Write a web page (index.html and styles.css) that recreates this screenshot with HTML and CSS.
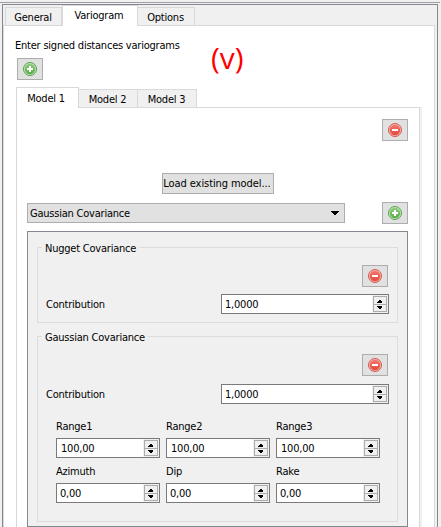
FILE: index.html
```html
<!DOCTYPE html>
<html lang="en">
<head>
<meta charset="utf-8">
<title>Variogram</title>
<link rel="stylesheet" href="styles.css">
</head>
<body>
<svg class="defs" width="0" height="0">
  <defs>
    <linearGradient id="green" x1="0" y1="0" x2="0" y2="1"><stop offset="0" stop-color="#8fca7f"/><stop offset="1" stop-color="#58ad48"/></linearGradient>
    <linearGradient id="red" x1="0" y1="0" x2="0" y2="1"><stop offset="0" stop-color="#f4786c"/><stop offset="1" stop-color="#e34a3c"/></linearGradient>
    <symbol id="plus" viewBox="0 0 14 14">
      <circle cx="7" cy="7" r="6.5" fill="#c9e6c1" stroke="#55a04b"/>
      <circle cx="7" cy="7" r="5.2" fill="url(#green)"/>
      <path d="M7 4v6M4 7h6" stroke="#fff" stroke-width="2"/>
    </symbol>
    <symbol id="minus" viewBox="0 0 14 14">
      <circle cx="7" cy="7" r="6.5" fill="#f7b9b1" stroke="#d05a50"/>
      <circle cx="7" cy="7" r="5.2" fill="url(#red)"/>
      <path d="M4 7h6" stroke="#fff" stroke-width="2"/>
    </symbol>
    <symbol id="spin" viewBox="0 0 16 18" shape-rendering="crispEdges">
      <path fill="#f0f0f0" d="M0 0h16v18H0z"/>
      <path fill="#acacac" d="M1 1h14v16H1z"/>
      <path fill="#f0f0f0" d="M2 2h12v7H2zM2 10h12v6H2z"/>
      <path d="M7 5h2v1H7zM6 6h4v1H6zM5 7h5v1H5zM5 11h5v1H5zM6 12h4v1H6zM7 13h2v1H7z"/>
    </symbol>
  </defs>
</svg>
<div class="window">
  <div class="frame">
    <div class="tabs main-tabs">
      <div class="tab general">General</div>
      <div class="tab active variogram">Variogram</div>
      <div class="tab options">Options</div>
    </div>
    <div class="pane">
      <div class="hint"><span class="hint-text">Enter signed distances variograms</span></div>
      <button class="icon-btn add-model"><svg><use href="#plus"/></svg></button>
      <div class="models">
        <div class="tabs model-tabs">
          <div class="tab active model">Model 1</div>
          <div class="tab model">Model 2</div>
          <div class="tab model">Model 3</div>
        </div>
        <div class="model-pane">
          <button class="icon-btn remove-model"><svg><use href="#minus"/></svg></button>
          <button class="load">Load existing model...</button>
          <div class="choose">
            <div class="combo"><span>Gaussian Covariance</span><svg width="8" height="4" shape-rendering="crispEdges"><path d="M0 0h8v1H0zM1 1h6v1H1zM2 2h4v1H2zM3 3h2v1H3z"/></svg></div>
            <button class="icon-btn"><svg><use href="#plus"/></svg></button>
          </div>
          <div class="scroll">
            <div class="group nugget">
              <div class="legend">Nugget Covariance</div>
              <button class="icon-btn"><svg><use href="#minus"/></svg></button>
              <div class="row"><label>Contribution</label><div class="spin"><span>1,0000</span><svg><use href="#spin"/></svg></div></div>
            </div>
            <div class="group gaussian">
              <div class="legend">Gaussian Covariance</div>
              <button class="icon-btn"><svg><use href="#minus"/></svg></button>
              <div class="row"><label>Contribution</label><div class="spin"><span>1,0000</span><svg><use href="#spin"/></svg></div></div>
              <div class="grid">
                <div class="field"><label>Range1</label><div class="spin wide"><span>100,00</span><svg><use href="#spin"/></svg></div></div>
                <div class="field"><label>Range2</label><div class="spin wide"><span>100,00</span><svg><use href="#spin"/></svg></div></div>
                <div class="field"><label>Range3</label><div class="spin wide"><span>100,00</span><svg><use href="#spin"/></svg></div></div>
                <div class="field"><label>Azimuth</label><div class="spin"><span>0,00</span><svg><use href="#spin"/></svg></div></div>
                <div class="field"><label>Dip</label><div class="spin"><span>0,00</span><svg><use href="#spin"/></svg></div></div>
                <div class="field"><label>Rake</label><div class="spin"><span>0,00</span><svg><use href="#spin"/></svg></div></div>
              </div>
            </div>
          </div>
        </div>
      </div>
    </div>
  </div>
</div>
<div class="note">(v)</div>
</body>
</html>
```
FILE: styles.css
```css
* { box-sizing: border-box; }
html, body { height: 100%; }
body {
  margin: 0;
  overflow: hidden;
  background: #f0f0f0;
  color: #000;
  font: 11px/14px "DejaVu Sans Condensed", "DejaVu Sans", sans-serif;
  font-stretch: condensed;
  letter-spacing: -0.22px;
  white-space: nowrap;
}
.defs { display: block; height: 0; }
button { font: inherit; letter-spacing: inherit; color: inherit; padding: 0; }
.window { height: 527px; padding: 2px 1px 0 0; }
.window::before { content: ""; display: block; height: 1px; background: #a0a0a0; }
.frame {
  height: 524px;
  margin: 1px 2px 0 2px;
  border: 1px solid #828790;
  border-bottom: 0;
}
.tabs { display: flex; align-items: flex-end; }
.tab {
  display: flex;
  align-items: center;
  justify-content: center;
  border: 1px solid #d9d9d9;
  border-left-width: 0;
  border-bottom: 0;
  background: #f0f0f0;
  padding: 2px 1px 0 0;
}
.tab.active { background: #fff; border-left-width: 1px; margin-bottom: -1px; }
.main-tabs { height: 20px; padding-left: 2px; }
.main-tabs .tab { height: 18px; }
.main-tabs .tab.active { height: 21px; padding: 0 2px 0 0; }
.tab.general { width: 57px; border-left-width: 1px; }
.tab.variogram { width: 76px; }
.tab.options { width: 57px; }
.pane {
  height: 502px;
  margin-right: 2px;
  padding: 12px 0 0 11px;
  background: #fff;
  border: 1px solid #d9d9d9;
  border-bottom: 0;
}
.hint { height: 20px; padding-top: 1px; }
.icon-btn {
  display: flex;
  align-items: center;
  justify-content: center;
  width: 26px;
  height: 22px;
  border: 1px solid #adadad;
  background: #e1e1e1;
}
.icon-btn svg { width: 14px; height: 14px; }
.add-model { margin-left: 2px; }
.models { margin: 7px 12px 0 1px; }
.model-tabs { height: 20px; }
.model-tabs .tab { width: 59px; height: 18px; }
.model-tabs .tab.active { width: 63px; height: 21px; padding: 1px 3px 0 0; }
.model-pane {
  display: flex;
  flex-direction: column;
  width: 404px;
  height: 420px;
  padding: 11px 11px 0 10px;
  border: 1px solid #d9d9d9;
  border-bottom: 0;
  box-shadow: 2px 0 #f0f0f0;
}
.remove-model { align-self: flex-end; }
.load {
  width: 112px;
  height: 21px;
  margin: 32px 0 0 135px;
  padding: 2px 2px 0 0;
  border: 1px solid #adadad;
  background: #e1e1e1;
  letter-spacing: -0.08px;
}
.choose { display: flex; justify-content: space-between; align-items: center; margin-top: 8px; }
.combo {
  display: flex;
  align-items: center;
  justify-content: space-between;
  width: 318px;
  height: 20px;
  padding: 0 5px 0 2px;
  border: 1px solid #adadad;
  background: #e1e1e1;
}
.combo span { padding-top: 2px; }
.scroll {
  height: 300px;
  margin-top: 7px;
  padding: 15px 9px 0;
  background: #f0f0f0;
  border: 1px solid #828790;
}
.group { padding: 0 8px; border: 1px solid #dcdcdc; }
.nugget { height: 76px; }
.gaussian { height: 186px; margin-top: 13px; }
.legend { width: max-content; height: 14px; margin: -7px 0 0 -4px; padding: 1px 3px 0; line-height: 13px; background: #f0f0f0; }
.group .icon-btn { margin: 10px 1px 0 auto; }
.row { display: flex; justify-content: space-between; align-items: center; margin-top: 7px; }
.gaussian .row { margin-top: 8px; }
.row .spin { width: 168px; }
.row label { padding-top: 2px; }
.spin {
  display: flex;
  align-items: center;
  justify-content: space-between;
  height: 20px;
  padding-left: 3px;
  border: 1px solid #7a7a7a;
  background: #fff;
}
.spin svg { width: 16px; height: 18px; }
.spin span { padding-top: 2px; }
.spin.wide { padding-left: 4px; }
.grid { display: grid; grid-template-columns: repeat(3, 104px); gap: 6px 6px; margin: 16px 0 0 10px; }
.field { height: 39px; }
.field .spin { margin-top: 4px; }
.field label { display: block; }
.note {
  position: absolute;
  left: 211px;
  top: 40px;
  color: #f00;
  font: 30px/36px "Open Sans", sans-serif;
  font-weight: 400;
  letter-spacing: 0;
}
```
